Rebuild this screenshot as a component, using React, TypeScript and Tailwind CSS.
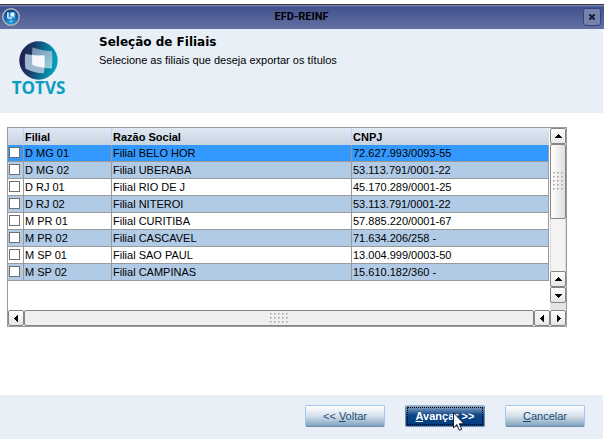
import React, { useState } from 'react';
import clsx from 'clsx';

interface Branch {
    id: string;
    name: string;
    cnpj: string;
}

const BRANCHES: Branch[] = [
    { id: 'D MG 01', name: 'Filial BELO HOR', cnpj: '72.627.993/0093-55' },
    { id: 'D MG 02', name: 'Filial UBERABA', cnpj: '53.113.791/0001-22' },
    { id: 'D RJ 01', name: 'Filial RIO DE J', cnpj: '45.170.289/0001-25' },
    { id: 'D RJ 02', name: 'Filial NITEROI', cnpj: '53.113.791/0001-22' },
    { id: 'M PR 01', name: 'Filial CURITIBA', cnpj: '57.885.220/0001-67' },
    { id: 'M PR 02', name: 'Filial CASCAVEL', cnpj: '71.634.206/258 -' },
    { id: 'M SP 01', name: 'Filial SAO PAUL', cnpj: '13.004.999/0003-50' },
    { id: 'M SP 02', name: 'Filial CAMPINAS', cnpj: '15.610.182/360 -' },
];

const ARROWS = {
    up: 'M4 2h1v1h1v1h1v1h1v1H1V5h1V4h1V3h1z',
    down: 'M1 3h7v1H7v1H6v1H5v1H4V6H3V5H2V4H1z',
    left: 'M6 1v7H5V7H4V6H3V5H2V4h1V3h1V2h1V1z',
    right: 'M3 1v7h1V7h1V6h1V5h1V4H6V3H5V2H4V1z',
};

const ScrollButton: React.FC<{ direction: keyof typeof ARROWS; label: string }> = ({ direction, label }) => (
    <button
        type="button"
        aria-label={label}
        className="flex size-4 shrink-0 items-center justify-center rounded-[2px] border border-[#858585] bg-linear-to-b from-white to-[#e6e6e6]"
    >
        <svg className="size-[9px]" viewBox="0 0 9 9" shapeRendering="crispEdges" aria-hidden="true">
            <path d={ARROWS[direction]} />
        </svg>
    </button>
);

// Dotted handle in the middle of a scroll thumb
const Grip: React.FC<{ cols: number; rows: number }> = ({ cols, rows }) => (
    <svg width={cols * 4 - 1} height={rows * 4 - 1} shapeRendering="crispEdges" aria-hidden="true">
        {Array.from({ length: cols * rows }, (_, i) => {
            const x = (i % cols) * 4;
            const y = Math.floor(i / cols) * 4;
            return <path key={i} d={`M${x} ${y}h2v1h-1v1h-1z`} fill="#b4b4b4" />;
        })}
    </svg>
);

const AppIcon: React.FC = () => (
    <svg className="size-[18px]" viewBox="0 0 18 18" aria-hidden="true">
        <defs>
            <radialGradient id="orb" cx="50%" cy="80%" r="70%">
                <stop offset="0" stopColor="#2fa8e4" />
                <stop offset="0.5" stopColor="#1470b8" />
                <stop offset="1" stopColor="#0b4688" />
            </radialGradient>
        </defs>
        <circle cx="9" cy="9" r="8.2" fill="url(#orb)" stroke="#b4b6ba" strokeWidth="1.5" />
        <path d="M5 4.600l1.800-.4v6.200L5 10z" fill="#c4e6fa" />
        <path d="M7.600 4.500h5.600v5.300l-5.600.9z" fill="#5aaee4" />
        <path d="M8.800 4.600h3.200v3.800H8.800z" fill="#e6f6ff" />
        <path d="M6.600 9.600h3v1.200h-3z" fill="#f4fbff" />
        <path d="M7.600 12.800h3l-1.500 1.400z" fill="#9adcf8" />
    </svg>
);

const TotvsLogo: React.FC = () => (
    <div className="flex w-[53px] flex-col items-center">
        <svg className="size-[39px]" viewBox="0 0 39 39" aria-hidden="true">
            <defs>
                <linearGradient id="sphere" x1="0" y1="0.4" x2="1" y2="0.6">
                    <stop offset="0" stopColor="#1d1c4c" />
                    <stop offset="0.35" stopColor="#18406c" />
                    <stop offset="0.7" stopColor="#0a7e9e" />
                    <stop offset="1" stopColor="#00a8c4" />
                </linearGradient>
                <linearGradient id="pane" x1="0" y1="0" x2="1" y2="1">
                    <stop offset="0" stopColor="#8295b8" />
                    <stop offset="1" stopColor="#a9dbe8" />
                </linearGradient>
            </defs>
            <circle cx="19.5" cy="19.5" r="19.2" fill="url(#sphere)" />
            <path d="M13.500 6.500c6 2 12.500 3.300 19.500 3.700.6 6 .5 11.500-.2 17.300-7-.1-13.300-1.300-19.300-3.500-.7-5.700-.7-11.500 0-17.500z" fill="url(#pane)" opacity="0.9" />
            <path d="M6.300 12.800c6 1.500 12.200 2 19 1.500.7 6.500.5 12.200-.4 18-6.800-.2-13-1.800-18.400-4.600-.8-5-.8-10-.2-14.900z" fill="#b9cbe0" opacity="0.85" />
            <path d="M13.100 14c4 .7 8 .8 12.200.3.500 4.500.5 8.500.2 12.400-4.300-.5-8.300-1.400-12.100-2.700-.4-3.300-.5-6.600-.3-10z" fill="#f4f7fb" />
        </svg>
        <span className="font-['Open_Sans'] text-[17px] leading-4 font-bold text-[#0a9dbf]">TOTVS</span>
    </div>
);

interface FooterButtonProps {
    accessKey: string;
    primary?: boolean;
    children: React.ReactNode;
}

const FooterButton: React.FC<FooterButtonProps> = ({ accessKey, primary, children }) => (
    <button
        type="button"
        accessKey={accessKey}
        className={clsx(
            'block h-[22px] w-20 rounded-[2px] border whitespace-nowrap',
            primary
                ? 'border-[#6f8caf] border-t-[#9fb4cc] bg-linear-to-b from-[#8fa9c6] via-[#0d4687] via-45% to-[#003c80] p-px font-bold text-white'
                : 'border-[#a4c8f0] border-b-[#6c8dac] bg-linear-to-b from-white via-[#d6e1eb] to-[#7fa2be] text-[#1b4b73]',
        )}
    >
        {primary ? (
            <span className="flex h-full items-center justify-center border border-dotted border-black">
                <span>{children}</span>
            </span>
        ) : (
            children
        )}
    </button>
);

export default function App() {
    const [selected, setSelected] = useState('D MG 01');
    const [checked, setChecked] = useState<string[]>([]);

    const toggle = (id: string) => {
        setChecked((prev) => (prev.includes(id) ? prev.filter((item) => item !== id) : [...prev, id]));
    };

    return (
        <div className="bg-white pt-1 pr-px font-['Liberation_Sans',Arial,sans-serif] text-[11px] leading-4 text-black">
            {/* Title bar */}
            <header className="-mr-px flex h-[25px] items-center border-t border-[#3a3a3a] bg-linear-to-b from-[#8b99c4] via-[#42528c] via-8% to-[#6370a3] px-[2px]">
                <AppIcon />
                <h1 className="flex-1 text-center font-['Roboto'] text-[11px] font-bold">EFD-REINF</h1>
                <button
                    type="button"
                    aria-label="Fechar"
                    className="mr-px flex size-[18px] items-center justify-center rounded-[3px] border border-[#2f4580] bg-[#7582ae]"
                >
                    <svg className="size-[6px]" viewBox="0 0 6 6" shapeRendering="crispEdges" aria-hidden="true">
                        <path d="M0 0h2v1h2V0h2v2H5v2h1v2H4V5H2v1H0V4h1V2H0z" fill="#1f2740" />
                    </svg>
                </button>
            </header>

            {/* Wizard heading */}
            <section className="flex h-[84px] gap-[34px] bg-[#e8eff7] pt-[5px] pl-3">
                <div className="pt-[7px]">
                    <TotvsLogo />
                </div>
                <div>
                    <h2 className="font-['DejaVu_Sans'] text-[12px] font-bold">Seleção de Filiais</h2>
                    <p className="pt-[2px]">Selecione as filiais que deseja exportar os títulos</p>
                </div>
            </section>

            <main className="pt-[14px] pr-9 pb-[68px] pl-[7px]">
                <div className="border border-[#9a9a9a]">
                    <div className="flex h-[182px]">
                        <div className="flex-1 pr-px">
                            <table className="w-full table-fixed border-separate border-spacing-0 text-left">
                                <colgroup>
                                    <col className="w-4" />
                                    <col className="w-[88px]" />
                                    <col className="w-[240px]" />
                                    <col />
                                </colgroup>
                                <thead>
                                    <tr className="h-[17px] bg-linear-to-b from-[#dfe9f4] to-[#c8d3e0]">
                                        <th className="border-r border-[#b5d3f2] p-0" aria-label="Marcar" />
                                        <th className="border-r border-[#b5d3f2] p-0 pl-px">Filial</th>
                                        <th className="border-r border-[#b5d3f2] p-0 pl-px">Razão Social</th>
                                        <th className="p-0 pl-px">CNPJ</th>
                                    </tr>
                                </thead>
                                <tbody>
                                    {BRANCHES.map((branch, i) => (
                                        <tr
                                            key={branch.id}
                                            onClick={() => setSelected(branch.id)}
                                            className={clsx(
                                                'h-[17px] *:border-r *:border-b *:border-[#9a9a9a] *:p-0 *:pl-px',
                                                branch.id === selected ? 'bg-[#3399ff]' : i % 2 ? 'bg-[#b1cbe7]' : 'bg-white',
                                            )}
                                        >
                                            <td className="pb-[2px]!">
                                                <input
                                                    type="checkbox"
                                                    aria-label={`Marcar ${branch.id}`}
                                                    checked={checked.includes(branch.id)}
                                                    onChange={() => toggle(branch.id)}
                                                    className="block size-[11px] appearance-none border border-[#707070] bg-white checked:bg-[#42528c]"
                                                />
                                            </td>
                                            <td>{branch.id}</td>
                                            <td>{branch.name}</td>
                                            <td>{branch.cnpj}</td>
                                        </tr>
                                    ))}
                                </tbody>
                            </table>
                        </div>

                        {/* Vertical scroll bar */}
                        <div className="flex w-4 flex-col bg-[#e4e4e4] pb-[7px]">
                            <ScrollButton direction="up" label="Rolar para cima" />
                            <div className="flex h-[75px] items-center justify-center rounded-[2px] border border-[#858585] bg-linear-to-r from-white to-[#dedede]">
                                <Grip cols={3} rows={5} />
                            </div>
                            <div className="flex-1 border-x border-dotted border-[#c4c4c4] bg-[#f3f3f3]" />
                            <ScrollButton direction="up" label="Rolar para cima" />
                            <ScrollButton direction="down" label="Rolar para baixo" />
                        </div>
                    </div>

                    {/* Horizontal scroll bar */}
                    <div className="flex h-4">
                        <ScrollButton direction="left" label="Rolar para a esquerda" />
                        <div className="flex flex-1 items-center justify-center rounded-[2px] border border-[#858585] bg-[#efefef]">
                            <Grip cols={5} rows={3} />
                        </div>
                        <ScrollButton direction="left" label="Rolar para a esquerda" />
                        <ScrollButton direction="right" label="Rolar para a direita" />
                    </div>
                </div>
            </main>

            <footer className="flex h-11 items-start justify-end gap-5 bg-[#e8eff7] pt-[10px] pr-[18px]">
                <FooterButton accessKey="v">
                    &lt;&lt; <u>V</u>oltar
                </FooterButton>
                <div className="relative">
                    <FooterButton accessKey="a" primary>
                        <u>A</u>vançar &gt;&gt;
                    </FooterButton>
                    {/* Mouse pointer */}
                    <svg className="pointer-events-none absolute top-[7px] left-12 h-[19px] w-3" viewBox="0 0 12 19" aria-hidden="true">
                        <path d="M.5.8v15l3.400-3.200 2.400 5.600 2.400-1-2.400-5.400h4.800z" fill="#fff" stroke="#1a1a2a" />
                    </svg>
                </div>
                <FooterButton accessKey="c">
                    <u>C</u>ancelar
                </FooterButton>
            </footer>
        </div>
    );
}
